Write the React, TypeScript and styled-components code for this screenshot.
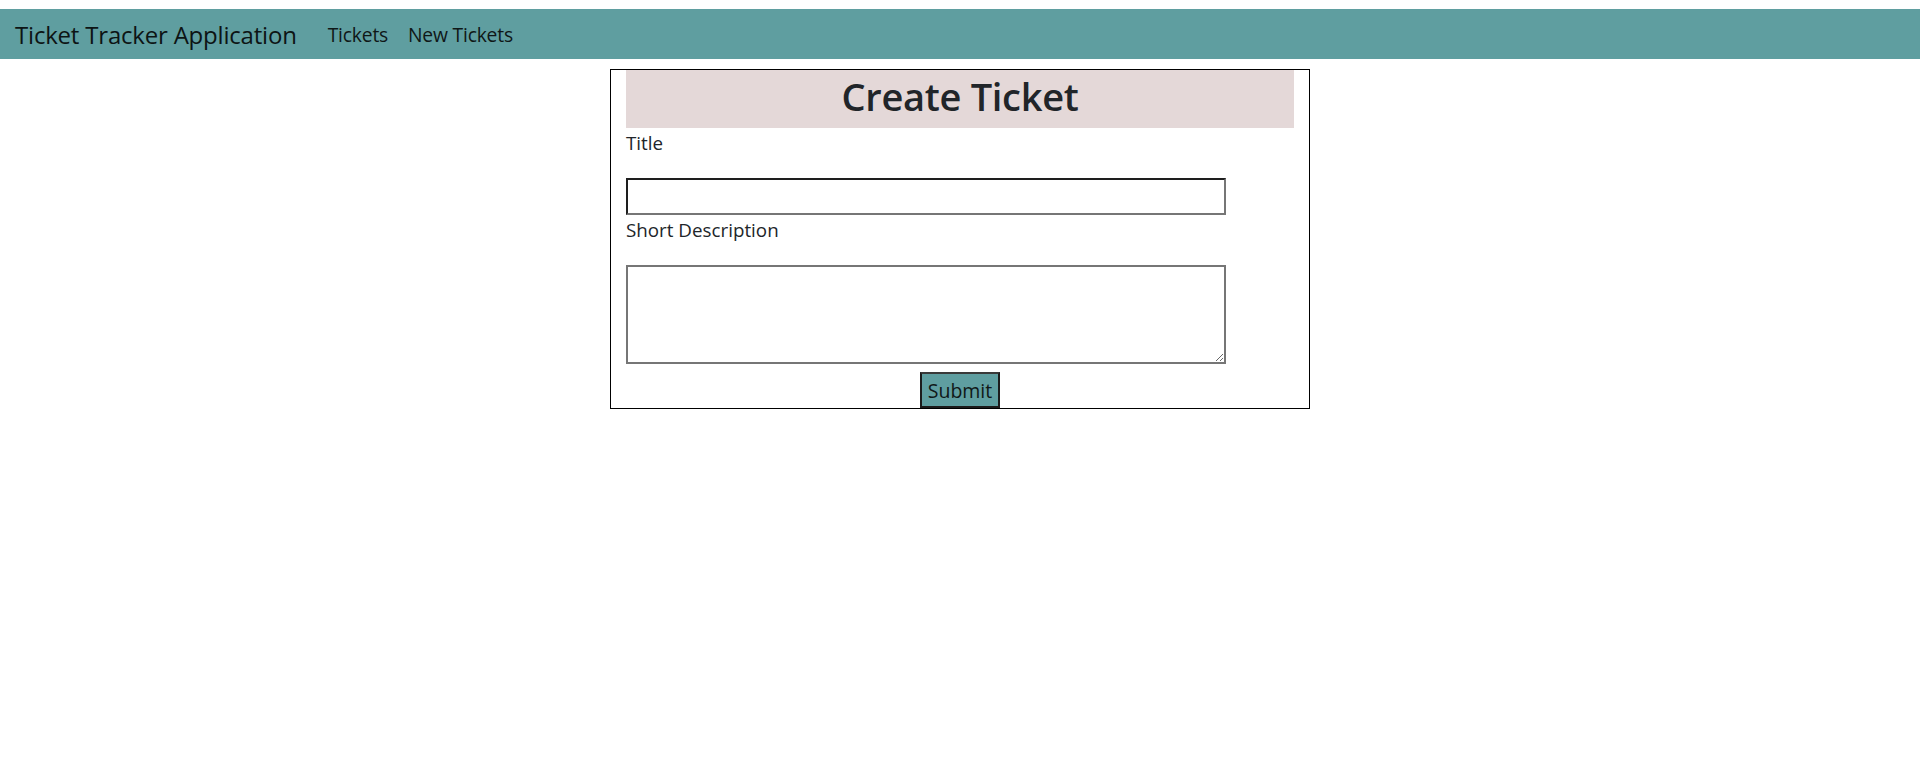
import React from "react";
import styled, { createGlobalStyle } from "styled-components";

const GlobalStyle = createGlobalStyle`
  * { box-sizing: border-box; }
  html, body { margin: 0; padding: 0; background: #ffffff; }
  body {
    font-family: "Open Sans", "Noto Sans", "Liberation Sans", sans-serif;
    color: #212529;
  }
`;

const Page = styled.div`
  padding-top: 9px;
`;

const NavBar = styled.nav`
  height: 50px;
  background: #5f9ea0;
  display: flex;
  align-items: center;
  padding-left: 15px;
`;

const Brand = styled.a`
  font-size: 24px;
  color: #0d1414;
  text-decoration: none;
  margin-right: 31px;
  letter-spacing: -0.2px;
`;

const NavLinks = styled.div`
  display: flex;
  gap: 20px;
  padding-top: 1px;
`;

const NavLink = styled.a`
  font-size: 19.3px;
  color: #0f1717;
  text-decoration: none;
  letter-spacing: -0.2px;
`;

const Card = styled.form`
  width: 700px;
  margin: 10px auto 0;
  border: 1px solid #000;
  padding: 0 15px;
`;

const Heading = styled.h1`
  margin: 0;
  height: 58px;
  padding-bottom: 6px;
  background: #e4d8d8;
  display: flex;
  align-items: center;
  justify-content: center;
  font-size: 38px;
  font-weight: 600;
  color: #212529;
  letter-spacing: -0.3px;
`;

const Label = styled.label`
  display: block;
  font-size: 18.8px;
  line-height: 27px;
  padding-top: 2px;
  margin-bottom: 21px;
  color: #212529;
`;

const TextInput = styled.input`
  display: block;
  width: 600px;
  height: 37px;
  margin: 0;
  border-style: solid;
  border-width: 2px;
  border-color: #1e1e1e #767676 #767676 #1e1e1e;
  background: #fff;
  font-size: 16px;
  padding: 1px 4px;
  outline: none;
`;

const TextArea = styled.textarea`
  display: block;
  width: 600px;
  height: 99px;
  margin: 0;
  border: 2px solid #767676;
  background: #fff;
  font-size: 16px;
  padding: 2px 4px;
  resize: both;
  outline: none;
`;

const Field = styled.div`
  display: flex;
  flex-direction: column;
`;

const SubmitButton = styled.button`
  display: block;
  margin: 8px auto 0;
  width: 80px;
  height: 36px;
  background: #5f9ea0;
  border: 2px solid #1c1c1c;
  border-top-color: #3a3a3a;
  font-family: "Open Sans", "Noto Sans", sans-serif;
  font-size: 19.5px;
  color: #101818;
  padding: 0;
  cursor: pointer;
`;

export default function App() {
  return (
    <>
      <GlobalStyle />
      <Page>
        <NavBar>
          <Brand href="#">Ticket Tracker Application</Brand>
          <NavLinks>
            <NavLink href="#">Tickets</NavLink>
            <NavLink href="#">New Tickets</NavLink>
          </NavLinks>
        </NavBar>
        <Card onSubmit={(e) => e.preventDefault()}>
          <Heading>Create Ticket</Heading>
          <Field>
            <Label htmlFor="title">Title</Label>
            <TextInput id="title" type="text" />
          </Field>
          <Field>
            <Label htmlFor="desc">Short Description</Label>
            <TextArea id="desc" />
          </Field>
          <SubmitButton type="submit">Submit</SubmitButton>
        </Card>
      </Page>
    </>
  );
}
